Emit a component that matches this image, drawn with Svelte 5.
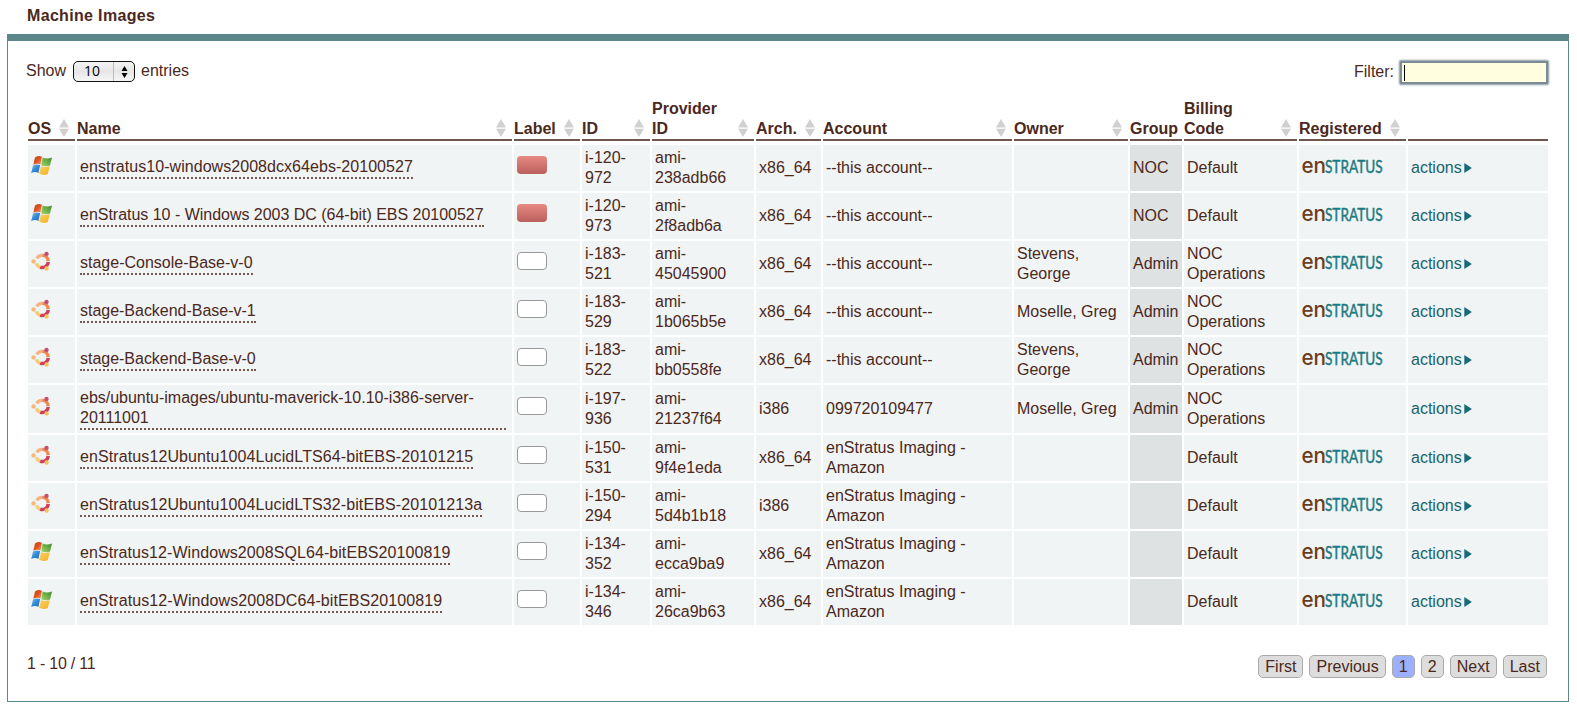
<script>
  const columns = [
    { label: 'OS', width: 47, sort: true },
    { label: 'Name', width: 435, sort: true },
    { label: 'Label', width: 66, sort: true },
    { label: 'ID', width: 68, sort: true },
    { label: 'Provider ID', width: 102, sort: true },
    { label: 'Arch.', width: 65, sort: true },
    { label: 'Account', width: 189, sort: true },
    { label: 'Owner', width: 114, sort: true },
    { label: 'Group', width: 52, sort: false },
    { label: 'Billing Code', width: 113, sort: true },
    { label: 'Registered', width: 107, sort: true },
    { label: '', width: 140, sort: false }
  ];

  const own = '--this account--';
  const imaging = 'enStratus Imaging - Amazon';
  const rows = [
    { os: 'win', track: 0.05, name: 'enstratus10-windows2008dcx64ebs-20100527', red: true, id: 'i-120-972', ami: 'ami-238adb66', arch: 'x86_64', account: own, owner: '', group: 'NOC', billing: 'Default', reg: true },
    { os: 'win', track: -0.02, name: 'enStratus 10 - Windows 2003 DC (64-bit) EBS 20100527', red: true, id: 'i-120-973', ami: 'ami-2f8adb6a', arch: 'x86_64', account: own, owner: '', group: 'NOC', billing: 'Default', reg: true },
    { os: 'ubu', track: 0, name: 'stage-Console-Base-v-0', red: false, id: 'i-183-521', ami: 'ami-45045900', arch: 'x86_64', account: own, owner: 'Stevens, George', group: 'Admin', billing: 'NOC Operations', reg: true },
    { os: 'ubu', track: -0.02, name: 'stage-Backend-Base-v-1', red: false, id: 'i-183-529', ami: 'ami-1b065b5e', arch: 'x86_64', account: own, owner: 'Moselle, Greg', group: 'Admin', billing: 'NOC Operations', reg: true },
    { os: 'ubu', track: -0.02, name: 'stage-Backend-Base-v-0', red: false, id: 'i-183-522', ami: 'ami-bb0558fe', arch: 'x86_64', account: own, owner: 'Stevens, George', group: 'Admin', billing: 'NOC Operations', reg: true },
    { os: 'ubu', track: -0.02, name: 'ebs/ubuntu-images/ubuntu-maverick-10.10-i386-server-20111001', red: false, id: 'i-197-936', ami: 'ami-21237f64', arch: 'i386', account: '099720109477', owner: 'Moselle, Greg', group: 'Admin', billing: 'NOC Operations', reg: false },
    { os: 'ubu', track: 0.1, name: 'enStratus12Ubuntu1004LucidLTS64-bitEBS-20101215', red: false, id: 'i-150-531', ami: 'ami-9f4e1eda', arch: 'x86_64', account: imaging, owner: '', group: '', billing: 'Default', reg: true },
    { os: 'ubu', track: 0.1, name: 'enStratus12Ubuntu1004LucidLTS32-bitEBS-20101213a', red: false, id: 'i-150-294', ami: 'ami-5d4b1b18', arch: 'i386', account: imaging, owner: '', group: '', billing: 'Default', reg: true },
    { os: 'win', track: 0.07, name: 'enStratus12-Windows2008SQL64-bitEBS20100819', red: false, id: 'i-134-352', ami: 'ami-ecca9ba9', arch: 'x86_64', account: imaging, owner: '', group: '', billing: 'Default', reg: true },
    { os: 'win', track: 0.09, name: 'enStratus12-Windows2008DC64-bitEBS20100819', red: false, id: 'i-134-346', ami: 'ami-26ca9b63', arch: 'x86_64', account: imaging, owner: '', group: '', billing: 'Default', reg: true }
  ];
  const pages = ['First', 'Previous', '1', '2', 'Next', 'Last'];
</script>

<svg width="0" height="0" class="defs" aria-hidden="true">
  <defs>
    <linearGradient id="wr" x1="0" y1="0" x2="1" y2="1"><stop offset="0" stop-color="#b8431f" /><stop offset=".5" stop-color="#e2521d" /><stop offset="1" stop-color="#f0a070" /></linearGradient>
    <linearGradient id="wg" x1="1" y1="0" x2="0" y2="1"><stop offset="0" stop-color="#3a8a2e" /><stop offset="1" stop-color="#a5d668" /></linearGradient>
    <linearGradient id="wb" x1="0" y1="0" x2="1" y2="1"><stop offset="0" stop-color="#8cc4ee" /><stop offset=".5" stop-color="#2f8bd6" /><stop offset="1" stop-color="#2a62b4" /></linearGradient>
    <linearGradient id="wy" x1="0" y1="0" x2="1" y2="1"><stop offset="0" stop-color="#f7d36a" /><stop offset="1" stop-color="#f5b01a" /></linearGradient>
  </defs>
</svg>

<h1>Machine Images</h1>
<section class="panel">
  <div class="tools">
    <div class="length">
      <span>Show</span>
      <div class="select">
        <span class="value">10</span>
        <span class="stepper"><svg width="7" height="12" viewBox="0 0 7 12"><path d="M3.5 0 6.5 5h-6zM3.5 12l3-5h-6z" /></svg></span>
      </div>
      <span>entries</span>
    </div>
    <div class="filter"><span>Filter:</span><div class="input"><i></i></div></div>
  </div>

  <table>
    <colgroup>{#each columns as c}<col style="width:{c.width}px" />{/each}</colgroup>
    <thead>
      <tr>
        {#each columns as c}
          <th>
            <div class="head" class:sortable={c.sort}>
              <span>{c.label}</span>
              {#if c.sort}
                <svg width="10" height="18" viewBox="0 0 10 18"><path d="M5 0 10 8.400H0zM5 18l5-8.200H0z" fill="#d0d0d0" /></svg>
              {/if}
            </div>
          </th>
        {/each}
      </tr>
    </thead>
    <tbody>
      {#each rows as r}
        <tr>
          <td>
            {#if r.os === 'win'}
              <svg class="os" width="22" height="20" viewBox="0 0 22 20">
                <path d="M4 2.500C6.400 .8 8.800 .6 11 1.800L9.400 9.600C7.200 8.400 4.800 8.400 2.300 9.700Z" fill="url(#wr)" />
                <path d="M11.700 2.400c2.700 1.400 5.700 1.500 9.300 .1l-2 8c-2.900 1.200-5.800 1.100-8.800-.2z" fill="url(#wg)" />
                <path d="M2 10.400c2.500-1.300 4.900-1.300 7.100-.1l-1.700 7.600C5.300 16.700 2.900 16.800 .2 18z" fill="url(#wb)" />
                <path d="M10 11c2.600 1.300 5.700 1.400 8.800.3l-2 7.700c-2.900 1.500-5.900 1.300-8.600-.4z" fill="url(#wy)" />
              </svg>
            {:else}
              <svg class="os" width="22" height="20" viewBox="0 0 22 20" fill="none">
                <g stroke-width="3.400">
                  <path d="M5.800 7.500A6 6 0 0 1 11.400 4.400" stroke="#f6b485" />
                  <path d="M11.300 4.400A6 6 0 0 1 17.200 10" stroke="#ef8752" />
                  <path d="M17.200 10.900A6 6 0 0 1 9 16.100" stroke="#d0405a" />
                  <path d="M9.200 16.200A6 6 0 0 1 5.400 12.200" stroke="#f5cf78" />
                </g>
                <circle cx="2.600" cy="10.400" r="2.200" fill="#f5b878" />
                <circle cx="15.500" cy="2.900" r="2.200" fill="#c44f69" />
                <circle cx="15.600" cy="17.500" r="2.200" fill="#f3c35c" />
              </svg>
            {/if}
          </td>
          <td><a style="letter-spacing:{r.track}px">{r.name}</a></td>
          <td><div class="label" class:red={r.red}></div></td>
          <td>{r.id}</td>
          <td>{r.ami}</td>
          <td>{r.arch}</td>
          <td>{r.account}</td>
          <td>{r.owner}</td>
          <td class="group">{r.group}</td>
          <td>{r.billing}</td>
          <td>
            {#if r.reg}
              <svg class="logo" width="90" height="36" viewBox="0 0 90 36">
                <text x="-.6" y="23" class="en" textLength="24.500" lengthAdjust="spacingAndGlyphs">en</text>
                <text x="23" y="23" class="stratus" textLength="57.500" lengthAdjust="spacingAndGlyphs">STRATUS</text>
              </svg>
            {/if}
          </td>
          <td><div class="actions">actions<svg width="8" height="10" viewBox="0 0 8 10"><path d="M.3 0 7.900 5 .3 10z" fill="#176b75" /></svg></div></td>
        </tr>
      {/each}
    </tbody>
  </table>

  <div class="foot">
    <span class="info">1 - 10 / 11</span>
    <nav>{#each pages as p}<span class:on={p === '1'}>{p}</span>{/each}</nav>
  </div>
</section>

<style>
  :global(body) {
    background: #fff;
    color: #4b281b;
    font: 16px/20px "Liberation Sans", Arial, sans-serif;
  }
  .defs { position: absolute; }
  h1 { margin: 0; padding: 6px 27px 8px; font-size: 16px; line-height: 20px; letter-spacing: .33px; }
  .panel {
    box-sizing: border-box;
    width: 1562px;
    height: 668px;
    margin-left: 7px;
    border: 1px solid #5c888b;
    border-top-width: 7px;
    padding: 18px 18px 0;
  }
  .tools { display: flex; justify-content: space-between; height: 38px; }
  .length { display: flex; align-items: flex-start; }
  .length > span { margin-top: 2px; }
  .select {
    box-sizing: border-box;
    display: flex;
    width: 62px;
    height: 21px;
    margin: 2px 6px 0 7px;
    border: 1px solid #111;
    border-radius: 5px;
    background: linear-gradient(#f4f4f4, #e6e6e6 50%, #f6f6f6);
    color: #000;
    overflow: hidden;
  }
  .value { width: 39px; padding-left: 10px; box-sizing: border-box; font: 14px/18px "Open Sans", sans-serif; }
  .stepper { flex: 1; display: flex; align-items: center; justify-content: center; border-left: 1px solid #bbb; }
  .filter { display: flex; align-items: flex-start; }
  .filter span { margin: 3px 6px 0 0; }
  .input {
    box-sizing: border-box;
    width: 148px;
    height: 23px;
    margin: 2px 2px 0 0;
    border: 2px solid #7d8b96;
    background: #ffffdf;
    box-shadow: 0 0 2px 1px #8796a1;
    border-radius: 1px;
    padding: 2px 2px;
  }
  .input i { display: block; width: 1px; height: 16px; background: #000; }
  table { table-layout: fixed; width: 1524px; border-spacing: 2px; border-collapse: separate; }
  th, td { padding: 0; text-align: left; }
  th { vertical-align: bottom; padding-bottom: 2px; }
  .head {
    display: flex;
    justify-content: space-between;
    align-items: flex-end;
    border-bottom: 2px solid #6f574d;
    min-height: 20px;
  }
  .sortable { padding-right: 6px; gap: 8px; }
  .head svg { flex: none; margin-bottom: 2px; }
  td { padding: 3px 6px 3px 3px; background: #f0f4f5; height: 40px; vertical-align: middle; }
  td a { display: block; width: fit-content; border-bottom: 2px dotted #75584d; }
  td.group { background: #dee2e3; padding-right: 0; }
  .os { display: block; margin-bottom: 6px; }
  .label {
    box-sizing: border-box;
    width: 30px;
    height: 18px;
    margin-bottom: 6px;
    border: 1px solid #999;
    border-radius: 4px;
    background: #fff;
  }
  .label.red { border-width: 0; background: linear-gradient(#e98882, #b9605c); }
  .logo { display: block; overflow: visible; }
  .en { font: 500 21px Inter, sans-serif; fill: #6b3d18; }
  .stratus { font: 400 16.500px Lato, sans-serif; fill: #1b7a80; stroke: #1b7a80; stroke-width: .45; }
  .actions { display: flex; align-items: center; color: #17646f; }
  .actions svg { margin-left: 2px; }
  .foot { display: flex; justify-content: space-between; padding: 26px 3px 0 1px; }
  .info { padding-top: 1px; letter-spacing: -.22px; }
  nav { display: flex; gap: 6px; padding-top: 2px; }
  nav span { border: 1px solid #aaa; border-radius: 5px; padding: 0 6.040px; line-height: 21px; background: #ddd; }
  nav .on { background: #9bb0ff; }
</style>
